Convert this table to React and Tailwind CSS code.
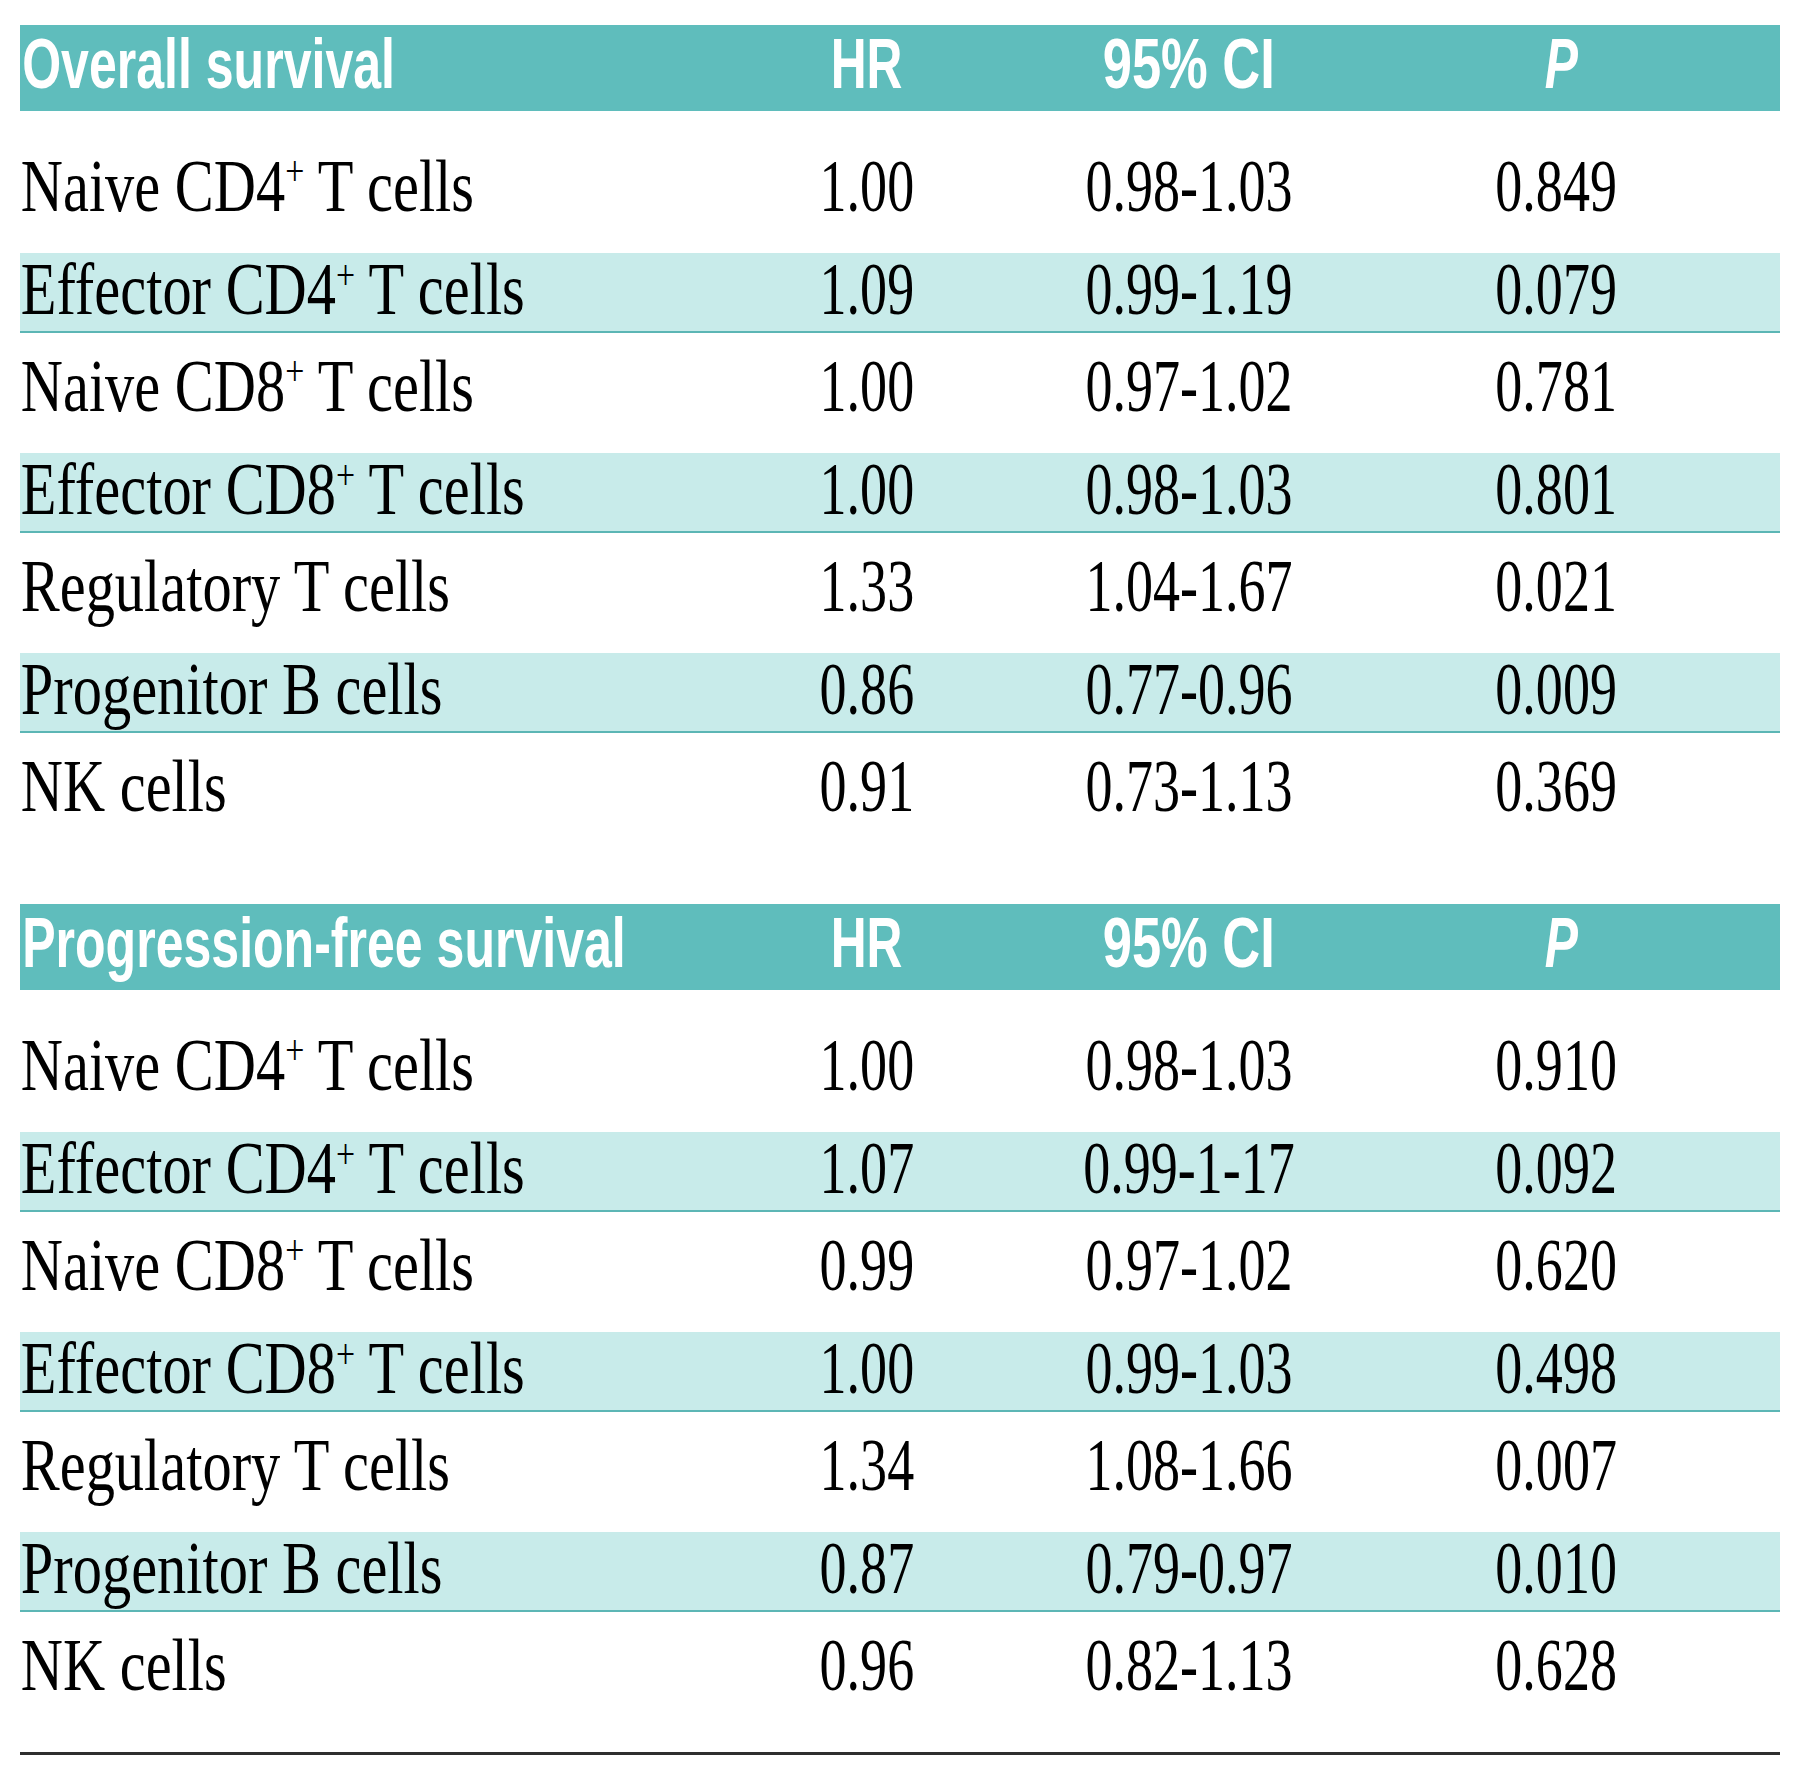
import React from "react";

const sans = { fontFamily: '"Liberation Sans", Arial, sans-serif' };
const serif = { fontFamily: '"Liberation Serif", "Times New Roman", serif' };

function Label({ a, sup, b }) {
  return (
    <span className="inline-block origin-left scale-x-[0.8] whitespace-nowrap pl-[1px]">
      {a}
      {sup && <sup className="text-[0.58em] top-[-0.6em]">{sup}</sup>}
      {b}
    </span>
  );
}

function Num({ v }) {
  return (
    <div className="flex justify-center">
      <span className="inline-block scale-x-[0.74] whitespace-nowrap">{v}</span>
    </div>
  );
}

function Row({ r, band }) {
  return (
    <div
      className={
        "grid grid-cols-[727px_240px_404px_330px] items-center text-[73px] leading-none text-black pb-[14px] " +
        (band
          ? "h-[80px] bg-[#c8ebea] border-b-2 border-[#5cb6b5]"
          : "h-[120px]")
      }
      style={serif}
    >
      <div>
        <Label a={r[0]} sup={r[1]} b={r[2]} />
      </div>
      <Num v={r[3]} />
      <Num v={r[4]} />
      <Num v={r[5]} />
    </div>
  );
}

function Section({ title, rows }) {
  return (
    <div>
      <div
        className="h-[86px] bg-[#5fbdbc] grid grid-cols-[727px_240px_404px_330px] items-center pb-[8px] text-white font-bold text-[70px] leading-none"
        style={sans}
      >
        <div>
          <span className="inline-block origin-left scale-x-[0.715] whitespace-nowrap pl-[3px]">
            {title}
          </span>
        </div>
        <div className="flex justify-center">
          <span className="inline-block scale-x-[0.71]">HR</span>
        </div>
        <div className="flex justify-center">
          <span className="inline-block scale-x-[0.75] whitespace-nowrap">95% CI</span>
        </div>
        <div className="flex justify-center pl-[10px]">
          <span className="inline-block scale-x-[0.71] italic">P</span>
        </div>
      </div>
      <div className="mt-[22px] flex flex-col">
        {rows.map((r, i) => (
          <Row key={i} r={r} band={i % 2 === 1} />
        ))}
      </div>
    </div>
  );
}

const os = [
  ["Naive CD4", "+", " T cells", "1.00", "0.98-1.03", "0.849"],
  ["Effector CD4", "+", " T cells", "1.09", "0.99-1.19", "0.079"],
  ["Naive CD8", "+", " T cells", "1.00", "0.97-1.02", "0.781"],
  ["Effector CD8", "+", " T cells", "1.00", "0.98-1.03", "0.801"],
  ["Regulatory T cells", null, "", "1.33", "1.04-1.67", "0.021"],
  ["Progenitor B cells", null, "", "0.86", "0.77-0.96", "0.009"],
  ["NK cells", null, "", "0.91", "0.73-1.13", "0.369"],
];

const pfs = [
  ["Naive CD4", "+", " T cells", "1.00", "0.98-1.03", "0.910"],
  ["Effector CD4", "+", " T cells", "1.07", "0.99-1-17", "0.092"],
  ["Naive CD8", "+", " T cells", "0.99", "0.97-1.02", "0.620"],
  ["Effector CD8", "+", " T cells", "1.00", "0.99-1.03", "0.498"],
  ["Regulatory T cells", null, "", "1.34", "1.08-1.66", "0.007"],
  ["Progenitor B cells", null, "", "0.87", "0.79-0.97", "0.010"],
  ["NK cells", null, "", "0.96", "0.82-1.13", "0.628"],
];

export default function App() {
  return (
    <div className="w-[1800px] h-[1783px] bg-white px-[20px] pt-[25px] overflow-hidden">
      <Section title="Overall survival" rows={os} />
      <div className="mt-[51px]">
        <Section title="Progression-free survival" rows={pfs} />
      </div>
      <div className="mt-[20px] h-[3px] bg-[#2e2e2e]" />
    </div>
  );
}
